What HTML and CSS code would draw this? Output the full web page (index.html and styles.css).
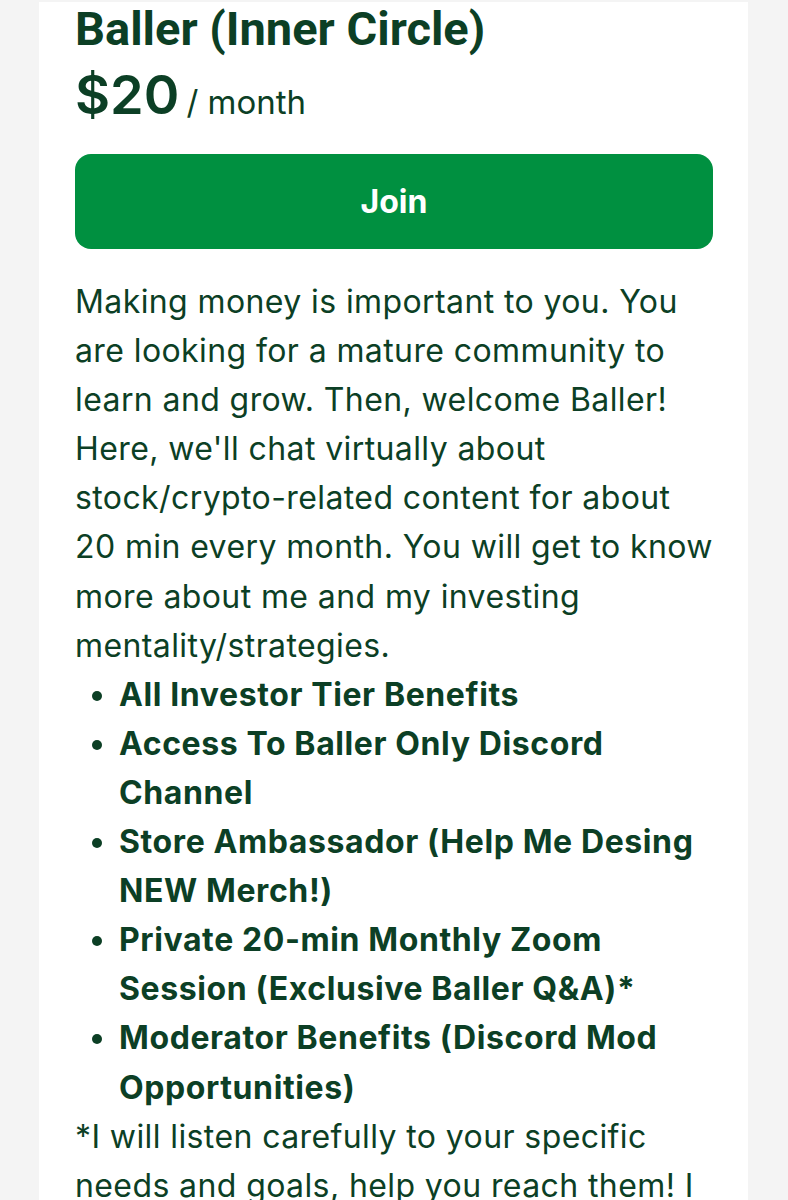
FILE: index.html
```html
<!DOCTYPE html>
<html lang="en">
<head>
    <meta charset="UTF-8">
    <title>Baller (Inner Circle)</title>
    <link rel="stylesheet" href="styles.css">
</head>
<body>
<div class="card">
    <h2 class="tier-name">Baller (Inner Circle)</h2>
    <div class="price">
        <span class="amount">$20</span>
        <span class="period">/ month</span>
    </div>

    <button type="button" class="join-btn">Join</button>

    <div class="description">
        <p>Making money is important to you. You are looking for a mature community to learn and grow. Then, welcome Baller! Here, we'll chat virtually about stock/crypto-related content for about 20 min every month. You will get to know more about me and my investing mentality/strategies.</p>
        <ul class="benefits">
            <li>All Investor Tier Benefits</li>
            <li>Access To Baller Only Discord Channel</li>
            <li>Store Ambassador (Help Me Desing NEW Merch!)</li>
            <li>Private 20-min Monthly Zoom Session (Exclusive Baller Q&amp;A)*</li>
            <li>Moderator Benefits (Discord Mod Opportunities)</li>
        </ul>
        <p>*I will listen carefully to your specific needs and goals, help you reach them! I will also share what I am working on and where I am headed next.</p>
    </div>
</div>
</body>
</html>
```

FILE: styles.css
```css
body {
    margin: 0;
    padding-top: 2px;
    font-family: Inter, "Liberation Sans", sans-serif;
    background-color: #f4f4f4;
    color: #0c3f25;
}
.card {
    margin: 0 40px 0 39px;
    padding: 0 35px 0 36px;
    background: white;
    min-height: 1300px;
}
.tier-name {
    margin: 0;
    font-family: Roboto, "Liberation Sans", sans-serif;
    font-size: 47px;
    line-height: 53px;
    font-weight: 700;
}
.price {
    display: flex;
    align-items: baseline;
    gap: 7px;
    margin-top: 13px;
}
.amount {
    font-size: 54px;
    line-height: 54px;
    font-weight: 600;
}
.period {
    font-size: 33px;
    line-height: 33px;
}
.join-btn {
    display: flex;
    align-items: center;
    justify-content: center;
    width: 100%;
    height: 95px;
    margin-top: 32px;
    background-color: #009040;
    color: white;
    border: none;
    border-radius: 16px;
    font-family: inherit;
    font-size: 32px;
    font-weight: 700;
    cursor: pointer;
}
.description {
    margin-top: 28px;
    font-size: 32px;
    line-height: 49.1px;
    letter-spacing: 0.4px;
}
.description p {
    margin: 0;
}
.benefits {
    margin: 0;
    padding-left: 44px;
    font-weight: 700;
    letter-spacing: 0.6px;
}
```
